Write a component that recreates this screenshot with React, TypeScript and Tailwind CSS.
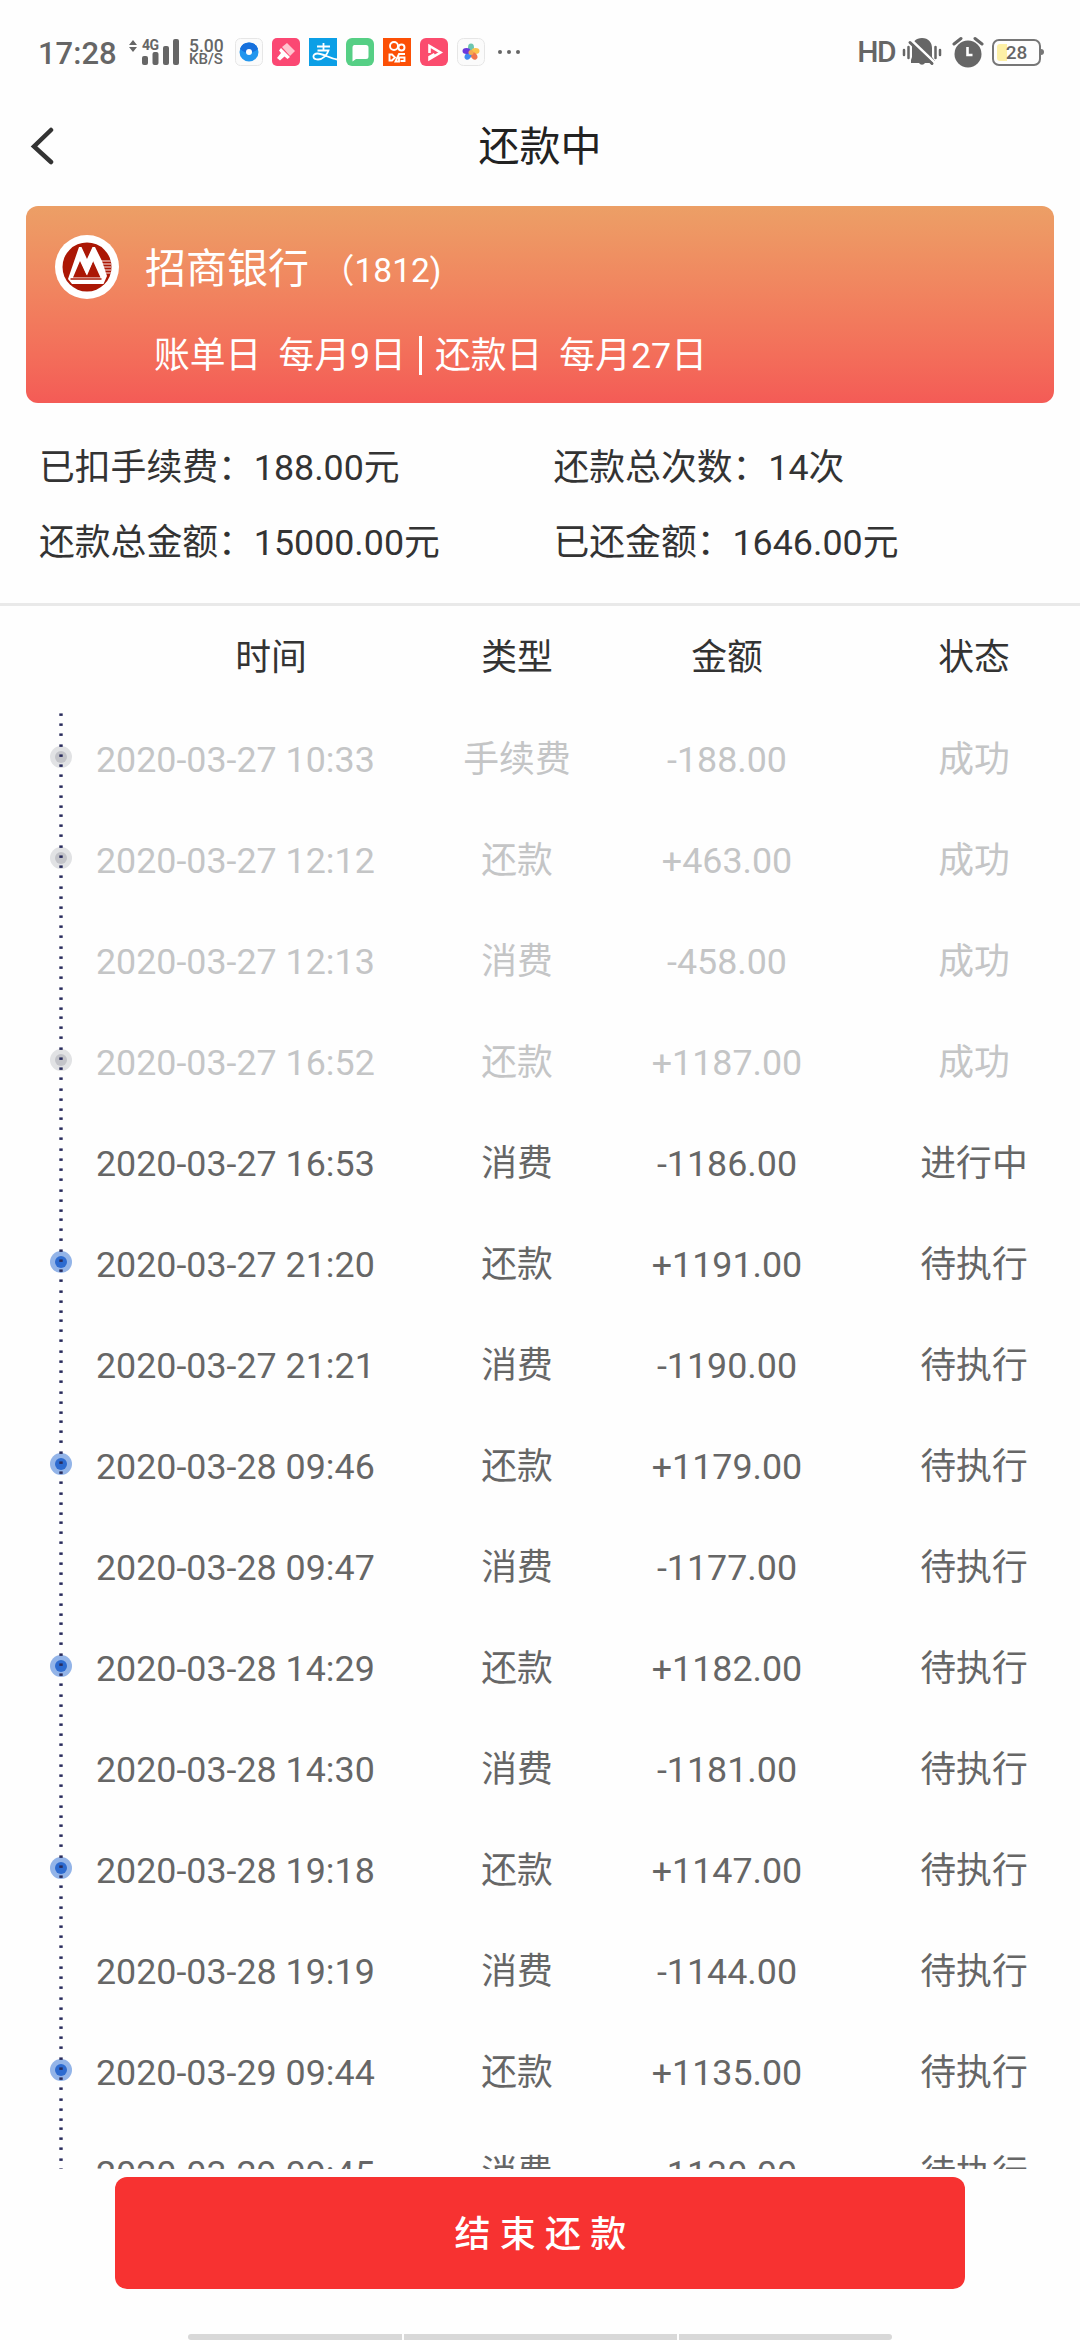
import React from 'react';

interface Entry {
  time: string;
  type: string;
  amount: string;
  status: string;
}

const entries: Entry[] = [
  { time: '2020-03-27 10:33', type: '手续费', amount: '-188.00', status: '成功' },
  { time: '2020-03-27 12:12', type: '还款', amount: '+463.00', status: '成功' },
  { time: '2020-03-27 12:13', type: '消费', amount: '-458.00', status: '成功' },
  { time: '2020-03-27 16:52', type: '还款', amount: '+1187.00', status: '成功' },
  { time: '2020-03-27 16:53', type: '消费', amount: '-1186.00', status: '进行中' },
  { time: '2020-03-27 21:20', type: '还款', amount: '+1191.00', status: '待执行' },
  { time: '2020-03-27 21:21', type: '消费', amount: '-1190.00', status: '待执行' },
  { time: '2020-03-28 09:46', type: '还款', amount: '+1179.00', status: '待执行' },
  { time: '2020-03-28 09:47', type: '消费', amount: '-1177.00', status: '待执行' },
  { time: '2020-03-28 14:29', type: '还款', amount: '+1182.00', status: '待执行' },
  { time: '2020-03-28 14:30', type: '消费', amount: '-1181.00', status: '待执行' },
  { time: '2020-03-28 19:18', type: '还款', amount: '+1147.00', status: '待执行' },
  { time: '2020-03-28 19:19', type: '消费', amount: '-1144.00', status: '待执行' },
  { time: '2020-03-29 09:44', type: '还款', amount: '+1135.00', status: '待执行' },
  { time: '2020-03-29 09:45', type: '消费', amount: '-1130.00', status: '待执行' },
];

const tickOffsets = [0, 10, 20, 31, 41, 51, 61, 72, 82, 92];

const AppIcons = () => (
  <div className="flex gap-[9px] ml-[11px]">
    <svg className="w-7 h-7" viewBox="0 0 28 28">
      <rect x="0.5" y="0.5" width="27" height="27" rx="5" fill="#fbfbfb" stroke="#e6e6e6" />
      <circle cx="14" cy="14" r="9.5" fill="#2196ee" />
      <path d="M5 11a9.5 9.5 0 0 1 18 0Q14 19 5 11z" fill="#1670dc" />
      <circle cx="14" cy="14" r="3" fill="#fff" />
    </svg>
    <svg className="w-7 h-7" viewBox="0 0 28 28">
      <rect width="28" height="28" rx="5" fill="#fb4873" />
      <path d="M10 9l5-4 8 8-5 5z" fill="#ffc4cf" />
      <path d="M9 10l9 9-2.5 2-3-2.5-4.5 4-3-2.5 4-5-2-2.5z" fill="#fff" />
    </svg>
    <svg className="w-7 h-7" viewBox="0 0 28 28">
      <rect width="28" height="28" fill="#0c9fe6" />
      <g fill="none" stroke="#fff" strokeWidth="1.8">
        <path d="M8 8.500h13M14.500 5v7.500M8.500 12.500h11C18 17 14 21.500 9 21.500c-6 0-6-6-.5-6 5 0 12 4.500 19.500 6" />
      </g>
    </svg>
    <svg className="w-7 h-7" viewBox="0 0 28 28">
      <rect width="28" height="28" rx="6" fill="#56cf85" />
      <path d="M8 7h12a2.500 2.500 0 0 1 2.500 2.500v9A2.500 2.500 0 0 1 20 21H10l-3.500 2.500V9.500A2.500 2.500 0 0 1 8 7z" fill="#fff" />
    </svg>
    <svg className="w-7 h-7" viewBox="0 0 28 28">
      <rect width="28" height="28" fill="#fc5006" />
      <g fill="none" stroke="#fff" strokeWidth="1.9">
        <circle cx="11" cy="8" r="4" />
        <circle cx="18.500" cy="9.500" r="3" />
        <path d="M6.500 16.500v6h2.500l3-3-3-3zM22 16h-6l-3.500 7.500h3.500v-4h5.500v3.500h-4" />
      </g>
    </svg>
    <svg className="w-7 h-7" viewBox="0 0 28 28">
      <rect width="28" height="28" rx="6" fill="#fb4c6e" />
      <path d="M9.500 15V8l11 6.500L9.500 21v-2l5-3" fill="none" stroke="#fff" strokeWidth="2.600" />
    </svg>
    <svg className="w-7 h-7" viewBox="0 0 28 28">
      <rect x="0.5" y="0.5" width="27" height="27" rx="6" fill="#fbfbfb" stroke="#e6e6e6" />
      <ellipse cx="14" cy="9.500" rx="3" ry="4" fill="#6cc5ae" />
      <ellipse cx="18.500" cy="13" rx="4" ry="3" fill="#fbc34c" />
      <ellipse cx="17" cy="18" rx="3" ry="4" transform="rotate(-35 17 18)" fill="#f0754f" />
      <ellipse cx="11" cy="18" rx="3" ry="4" transform="rotate(35 11 18)" fill="#3f8cf0" />
      <ellipse cx="9.500" cy="13" rx="4" ry="3" fill="#6a39dc" />
      <circle cx="14" cy="14.500" r="2.500" fill="#f5a94f" />
    </svg>
  </div>
);

const StatusBar = () => (
  <div className="flex items-center h-[104px] pl-[38px] pr-[36px] text-[#666]">
    <span className="text-[31px] leading-none font-medium w-[91px] pt-[3px]">17:28</span>
    <svg className="w-2 h-3 -mt-[13px]" viewBox="0 0 8 12" fill="#666">
      <path d="M4 0l4 5H0zM4 12L0 7h8z" />
    </svg>
    <div className="relative w-[38px] h-7 ml-[5px]">
      <svg className="w-[38px] h-7" viewBox="0 0 38 28" fill="#666">
        <rect x="0" y="18" width="6" height="9" rx="2" />
        <rect x="10.500" y="14" width="6" height="13" rx="2" />
        <rect x="21" y="8" width="6" height="19" rx="2" />
        <rect x="31" y="1" width="6" height="26" rx="2" />
      </svg>
      <span className="absolute left-0 top-0 text-[14px] leading-[14px] font-bold tracking-[-0.5px]">4G</span>
    </div>
    <div className="flex flex-col w-[35px] ml-[9px] font-medium">
      <span className="text-[17.5px] leading-[14px]">5.00</span>
      <span className="text-[15px] leading-[12px]">KB/S</span>
    </div>
    <AppIcons />
    <div className="flex gap-[5px] ml-[13px]">
      <i className="size-1 rounded-full bg-[#666]" />
      <i className="size-1 rounded-full bg-[#666]" />
      <i className="size-1 rounded-full bg-[#666]" />
    </div>
    <span className="ml-auto text-[30px] leading-none tracking-[-1.5px] font-medium">HD</span>
    <svg className="w-10 h-8 ml-[7px]" viewBox="0 0 40 32" fill="#666">
      <path d="M20 2c6.500 0 10 4.500 10 10v9l3 4v2H23a3.500 3.500 0 0 1-6 0H9v-3l1-3v-9C10 6 14 2 20 2z" />
      <path d="M8 3l26 25" stroke="#fff" strokeWidth="3" />
      <path d="M8 6.500l22 21" stroke="#666" strokeWidth="3" strokeLinecap="round" />
      <path d="M2 14v5M6.500 11v11M33.500 11v11M38 14v5" stroke="#666" strokeWidth="2.500" strokeLinecap="round" />
    </svg>
    <svg className="w-8 h-8 ml-2.5" viewBox="0 0 32 32">
      <circle cx="16" cy="18" r="13.500" fill="#666" />
      <path d="M2 8l7-5.500M30 8l-7-5.500" stroke="#666" strokeWidth="3" strokeLinecap="round" />
      <path d="M15.500 11v8h5" fill="none" stroke="#fff" strokeWidth="2.600" />
    </svg>
    <div className="flex items-center ml-2">
      <div className="relative w-[49px] h-[27px] border-2 border-[#777] rounded-[7px] p-[3px]">
        <div className="w-[10px] h-full rounded-l-[3px] bg-[#fdf0a6]" />
        <span className="absolute inset-0 text-center text-[19px] leading-[24px] font-medium">28</span>
      </div>
      <div className="w-[3px] h-[6px] rounded-r bg-[#777]" />
    </div>
  </div>
);

const BankLogo = () => (
  <svg className="size-16" viewBox="0 0 64 64">
    <circle cx="32" cy="32" r="32" fill="#fff" />
    <circle cx="32" cy="32" r="24.5" fill="#ab1705" />
    <path d="M46 26h10M47 29h9.500M48 32h8.500M49 35h7.500M51 38h5" stroke="#e0a59e" strokeWidth="1.600" />
    <path d="M13 44L24 12h2.500L32 24l5.500-12H40l7 14 5 15-3.500 8H17z" fill="#fff" />
    <path d="M18 42.500L25 26l6.500 14L38 26l7.500 16.500z" fill="#ab1705" />
    <path d="M25 20l7 16 6-14" fill="none" stroke="#fff" strokeWidth="3.500" />
    <path d="M15.500 44h31" stroke="#ab1705" strokeWidth="1.500" />
  </svg>
);

const TimelineMarker: React.FC<{ dot: boolean; done: boolean }> = ({ dot, done }) => (
  <svg className="w-6 h-[101px] overflow-visible" viewBox="0 0 24 101">
    {dot && <circle cx="12" cy="44" r="11" fill={done ? '#e1e2e4' : '#93b4e8'} />}
    {dot && <circle cx="12" cy="44" r="6" fill={done ? '#c3c4c9' : '#2d6bd0'} />}
    {tickOffsets.map((y) => (
      <rect key={y} x="10.3" y={y + 0.4} width="3.4" height="2.5" fill="#292b5c" />
    ))}
  </svg>
);

export default function App() {
  return (
    <div className="flex flex-col w-[1080px] h-[2340px] bg-[#fefefe] overflow-hidden whitespace-nowrap font-[Roboto,'Noto_Sans_CJK_SC',sans-serif]">
      <StatusBar />

      <header className="grid grid-cols-[1fr_auto_1fr] items-center h-[84px] px-[30px] mb-[18px]">
        <svg className="w-6 h-10" viewBox="0 0 24 40">
          <path d="M21 4L4 20.500 21 36" fill="none" stroke="#333" strokeWidth="4.500" strokeLinecap="round" />
        </svg>
        <h1 className="pt-[2px] text-[41px] leading-none text-[#222]">还款中</h1>
      </header>

      <section className="mx-[26px] h-[197px] rounded-xl bg-linear-to-b from-[#ec9f66] to-[#f45b56] text-white">
        <div className="flex items-center pt-[29px] pl-[29px]">
          <BankLogo />
          <span className="ml-[26px] mt-[4px] text-[41px] leading-none">招商银行</span>
          <span className="ml-3 mt-[8px] text-[33.5px] leading-none">（1812)</span>
        </div>
        <div className="flex items-center mt-[35px] pl-[128px] text-[35.8px] leading-[39px]">
          <span className="pt-[3px]">账单日</span>
          <span className="ml-[17px] pt-[3px]">每月9日</span>
          <i className="w-[3px] h-[39px] mx-[13px] bg-white" />
          <span className="pt-[3px]">还款日</span>
          <span className="ml-[17px] pt-[3px]">每月27日</span>
        </div>
      </section>

      <section className="grid grid-cols-2 content-start gap-y-[35px] h-[200px] pt-[45px] pl-[39px] text-[35.8px] leading-10 text-[#333]">
        <span>已扣手续费：188.00元</span>
        <span className="-ml-[6px]">还款总次数：14次</span>
        <span>还款总金额：15000.00元</span>
        <span className="-ml-[6px]">已还金额：1646.00元</span>
      </section>

      <div className="grid grid-cols-[354px_138px_282px_212px] shrink-0 items-center h-[110px] border-t-3 border-[#e9e9e9] pl-[94px] pb-[2px] text-center text-[35.8px] leading-none text-[#333]">
        <span>时间</span>
        <span>类型</span>
        <span>金额</span>
        <span>状态</span>
      </div>

      <ul className="h-[1456px] shrink-0 overflow-hidden text-[35.8px] leading-[94px]">
        {entries.map((e) => {
          const done = e.status === '成功';
          return (
            <li
              key={e.time}
              className={`grid grid-cols-[24px_375px_138px_282px_212px] h-[101px] pl-[49px] text-center ${done ? 'text-[#c4c5c6]' : 'text-[#666]'}`}
            >
              <TimelineMarker dot={e.type !== '消费'} done={done} />
              <span className="pl-[23px] text-left">{e.time}</span>
              <span>{e.type}</span>
              <span>{e.amount}</span>
              <span>{e.status}</span>
            </li>
          );
        })}
      </ul>

      <button className="shrink-0 mx-[115px] mt-2 h-28 pl-[10px] pt-[3px] rounded-xl bg-[#f73231] text-white text-[36px] leading-none font-medium tracking-[9.200px]">
        结束还款
      </button>

      <div className="flex gap-[2px] h-[6px] w-[704px] mt-auto mx-auto">
        <i className="w-[214px] rounded-l bg-[#d8d8d8]" />
        <i className="w-[273px] bg-[#d8d8d8]" />
        <i className="w-[213px] rounded-r bg-[#d8d8d8]" />
      </div>
    </div>
  );
}
